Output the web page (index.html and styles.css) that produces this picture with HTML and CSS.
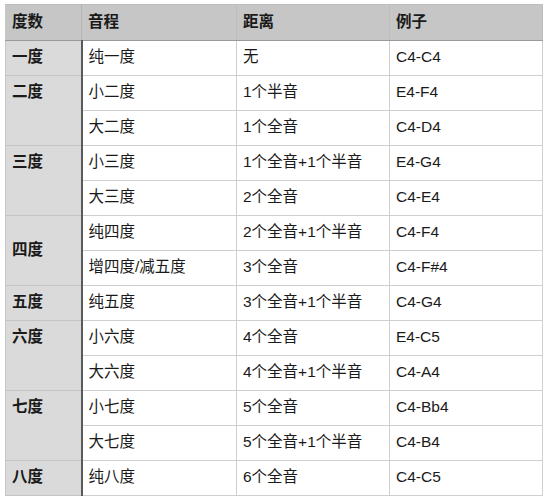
FILE: index.html
```html
<!DOCTYPE html>
<html lang="zh">
<head>
<meta charset="utf-8">
<link rel="stylesheet" href="styles.css">
</head>
<body>
<table class="tbl">
  <colgroup>
    <col class="c1"><col class="c2"><col class="c3"><col class="c4">
  </colgroup>
  <thead>
    <tr><th class="deg">度数</th><th>音程</th><th>距离</th><th>例子</th></tr>
  </thead>
  <tbody>
    <tr><td class="deg">一度</td><td>纯一度</td><td>无</td><td>C4-C4</td></tr>
    <tr><td class="deg top" rowspan="2">二度</td><td>小二度</td><td>1个半音</td><td>E4-F4</td></tr>
    <tr><td>大二度</td><td>1个全音</td><td>C4-D4</td></tr>
    <tr><td class="deg top" rowspan="2">三度</td><td>小三度</td><td>1个全音+1个半音</td><td>E4-G4</td></tr>
    <tr><td>大三度</td><td>2个全音</td><td>C4-E4</td></tr>
    <tr><td class="deg" rowspan="2">四度</td><td>纯四度</td><td>2个全音+1个半音</td><td>C4-F4</td></tr>
    <tr><td>增四度/减五度</td><td>3个全音</td><td>C4-F#4</td></tr>
    <tr><td class="deg">五度</td><td>纯五度</td><td>3个全音+1个半音</td><td>C4-G4</td></tr>
    <tr><td class="deg top" rowspan="2">六度</td><td>小六度</td><td>4个全音</td><td>E4-C5</td></tr>
    <tr><td>大六度</td><td>4个全音+1个半音</td><td>C4-A4</td></tr>
    <tr><td class="deg top" rowspan="2">七度</td><td>小七度</td><td>5个全音</td><td>C4-Bb4</td></tr>
    <tr><td>大七度</td><td>5个全音+1个半音</td><td>C4-B4</td></tr>
    <tr><td class="deg">八度</td><td>纯八度</td><td>6个全音</td><td>C4-C5</td></tr>
  </tbody>
</table>
</body>
</html>
```
FILE: styles.css
```css
html, body {
  margin: 0;
  padding: 0;
  background: #ffffff;
}
body {
  padding: 4px 0 0 5px;
  font-family: "Liberation Sans", "Noto Sans CJK SC", sans-serif;
  font-size: 15.5px;
  color: #1a1a1a;
}
.tbl {
  border-collapse: collapse;
  table-layout: fixed;
  width: 537px;
}
.c1 { width: 76px; }
.c2 { width: 155px; }
.c3 { width: 153px; }
.c4 { width: 153px; }
.tbl th, .tbl td {
  border: 1px solid #cfcfcf;
  padding: 0 6px 2px 6px;
  text-align: left;
  vertical-align: middle;
  white-space: nowrap;
  line-height: 20px;
}
.tbl th {
  height: 33px;
  background: #c6c6c6;
  font-weight: 600;
  border-color: #bdbdbd;
  border-bottom: 1px solid #9a9a9a;
}
.tbl td {
  height: 32px;
}
.tbl .deg {
  background: #dadada;
  font-weight: 600;
  border-right: 2px solid #5a5a5a;
  border-left-color: #c8c8c8;
}
.tbl th.deg {
  background: #c6c6c6;
  border-right: 1px solid #b4b4b4;
}
.tbl td.deg {
  border-bottom-color: #c4c4c4;
}
.tbl td.top {
  vertical-align: top;
  padding-top: 6px;
}
```
